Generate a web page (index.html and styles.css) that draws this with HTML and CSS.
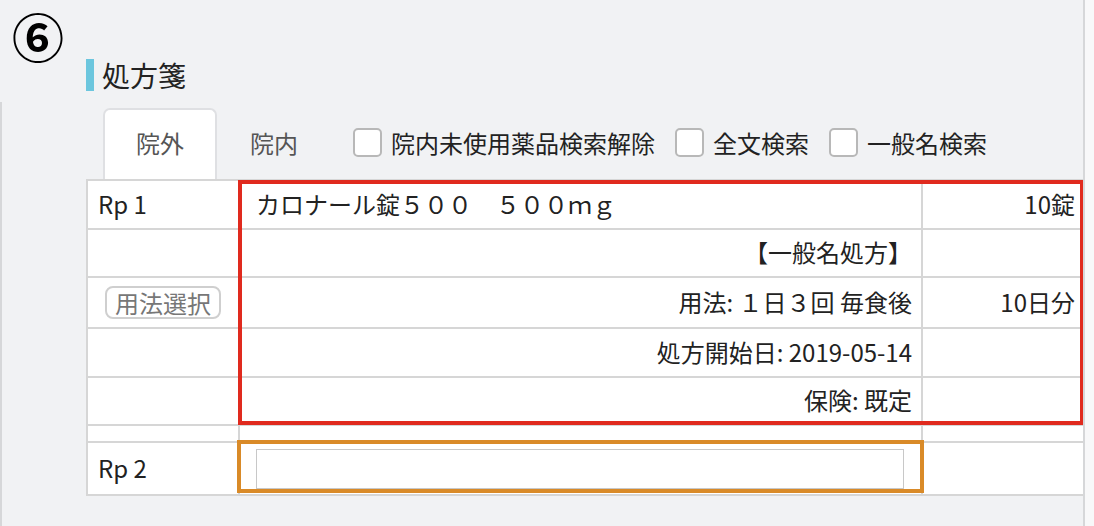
FILE: index.html
```html
<!DOCTYPE html>
<html lang="ja">
<head>
<meta charset="utf-8">
<title>処方箋</title>
<link rel="stylesheet" href="styles.css">
</head>
<body>
<div class="page">
  <div class="num">⑥</div>
  <h2 class="title"><span class="bar"></span>処方箋</h2>
  <div class="panel">
    <div class="tabs">
      <div class="tab active">院外</div>
      <div class="tab">院内</div>
      <label class="check first"><span class="box"></span>院内未使用薬品検索解除</label>
      <label class="check"><span class="box"></span>全文検索</label>
      <label class="check"><span class="box"></span>一般名検索</label>
    </div>
    <div class="rx">
      <table>
        <colgroup><col class="c1"><col class="c2"><col class="c3"></colgroup>
        <tr class="r1"><td class="lbl">Rp 1</td><td class="name">カロナール錠５００　５００ｍｇ</td><td class="num-cell">10錠</td></tr>
        <tr class="r2"><td></td><td class="right">【一般名処方】</td><td></td></tr>
        <tr class="r3"><td class="center"><span class="btn">用法選択</span></td><td class="right">用法: １日３回 毎食後</td><td class="num-cell">10日分</td></tr>
        <tr class="r4"><td></td><td class="right">処方開始日: 2019-05-14</td><td></td></tr>
        <tr class="r5"><td></td><td class="right">保険: 既定</td><td></td></tr>
        <tr class="spacer"><td></td><td></td><td></td></tr>
        <tr class="r6"><td class="lbl">Rp 2</td><td class="input-cell"><div class="input"></div></td><td></td></tr>
      </table>
      <div class="hl hl-red"></div>
      <div class="hl hl-orange"></div>
    </div>
  </div>
</div>
</body>
</html>
```
FILE: styles.css
```css
html, body {
  margin: 0;
  padding: 0;
}
body {
  background: #f8f8f9;
  font-family: "Noto Sans CJK JP", sans-serif;
  color: #222;
}
.page {
  width: 1083px;
  height: 526px;
  background: #f1f2f4;
  border-right: 2px solid #d6d7d9;
  display: flex;
  flex-direction: column;
  overflow: hidden;
}
.num {
  font-size: 52px;
  line-height: 62px;
  padding: 5px 0 0 12px;
  font-weight: 700;
  color: #000;
}
.title {
  display: flex;
  align-items: center;
  gap: 8px;
  height: 32px;
  margin: -8px 0 0 86px;
  font-size: 28px;
  font-weight: normal;
  color: #222;
}
.bar {
  width: 8px;
  height: 32px;
  background: #6cc6de;
}
.panel {
  flex: 1;
  margin-top: 11px;
  border-left: 2px solid #d6d7d9;
  padding: 6px 0 0 84px;
}
.tabs {
  display: flex;
  align-items: center;
  height: 71px;
  padding-left: 17px;
}
.tab {
  width: 114px;
  height: 71px;
  box-sizing: border-box;
  display: flex;
  align-items: center;
  justify-content: center;
  font-size: 24px;
  color: #555;
  padding-bottom: 3px;
}
.tab.active {
  background: #fff;
  border: 2px solid #dfe0e3;
  border-bottom: none;
  border-radius: 7px 7px 0 0;
  padding-bottom: 5px;
}
.check {
  display: flex;
  align-items: center;
  gap: 9px;
  margin-left: 20px;
  font-size: 24px;
  color: #222;
  padding-bottom: 3px;
}
.check.first {
  margin-left: 22px;
}
.box {
  width: 29px;
  height: 29px;
  box-sizing: border-box;
  border: 2px solid #b8b8b8;
  border-radius: 5px;
  background: #fff;
}
.rx {
  position: relative;
  width: 999px;
}
table {
  width: 999px;
  border-collapse: collapse;
  table-layout: fixed;
  background: #fff;
}
col.c1 { width: 152px; }
col.c2 { width: 683px; }
col.c3 { width: 164px; }
td {
  border: 2px solid #d6d6d6;
  padding: 0 0 2px;
  font-size: 24px;
  line-height: 30px;
  color: #222;
  white-space: nowrap;
}
tr.r1 { height: 49px; }
tr.r2 { height: 48px; }
tr.r3 { height: 51px; }
tr.r4 { height: 49px; }
tr.r5 { height: 48px; }
tr.spacer { height: 17px; }
tr.r6 { height: 53px; }
td.lbl { padding-left: 10px; }
td.name { padding-left: 16px; }
td.right { text-align: right; padding-right: 9px; }
td.num-cell { text-align: right; padding-right: 10px; }
td.center { text-align: center; padding-bottom: 0; }
td.input-cell { padding: 0 17px 0 16px; }
.btn {
  display: inline-block;
  height: 33px;
  box-sizing: border-box;
  line-height: 29px;
  padding: 0 8px;
  border: 2px solid #cfcfcf;
  border-radius: 8px;
  color: #777;
  font-size: 24px;
}
.input {
  height: 40px;
  box-sizing: border-box;
  border: 1px solid #c8c8c8;
  background: #fff;
}
.hl {
  position: absolute;
  box-sizing: border-box;
  border: 4px solid;
  pointer-events: none;
}
.hl-red {
  left: 152px;
  top: 1px;
  width: 846px;
  height: 245px;
  border-color: #e02a1e;
}
.hl-orange {
  left: 151px;
  top: 261px;
  width: 687px;
  height: 53px;
  border-color: #d98a28;
}
```
